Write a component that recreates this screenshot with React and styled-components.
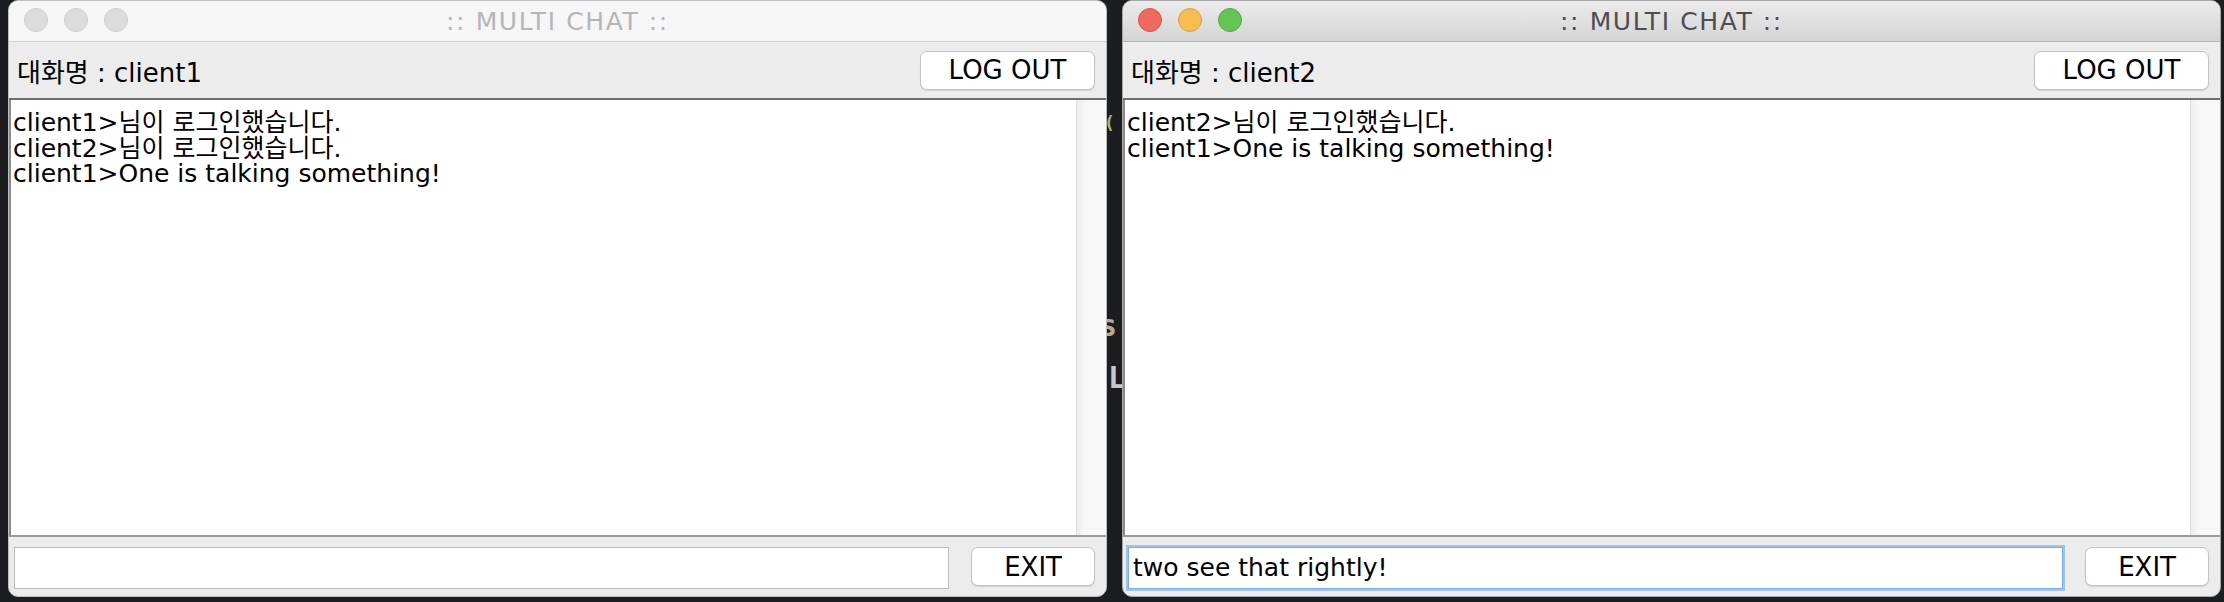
import React from 'react';
import styled, { createGlobalStyle } from 'styled-components';

const GlobalStyle = createGlobalStyle`
  html, body {
    margin: 0;
    padding: 0;
    background: #1c1d20;
    overflow: hidden;
  }
  * { box-sizing: border-box; }
`;

const FONT = `"DejaVu Sans", "Noto Sans CJK KR", sans-serif`;

const chats = [
  {
    id: 'client1',
    active: false,
    lines: ['client1>님이 로그인했습니다.', 'client2>님이 로그인했습니다.', 'client1>One is talking something!'],
    draft: '',
  },
  {
    id: 'client2',
    active: true,
    lines: ['client2>님이 로그인했습니다.', 'client1>One is talking something!'],
    draft: 'two see that rightly!',
  },
];

class ChatWindow extends React.Component {
  render() {
    const { chat } = this.props;
    return (
      <Frame $active={chat.active}>
        <TitleBar $active={chat.active}>
          <Lights>
            <Light $color={chat.active ? '#ee6a5f' : '#dcdcdc'} $edge={chat.active ? '#d4544a' : '#d0d0d0'} />
            <Light $color={chat.active ? '#f5be4f' : '#dcdcdc'} $edge={chat.active ? '#d6a243' : '#d0d0d0'} />
            <Light $color={chat.active ? '#62c554' : '#dcdcdc'} $edge={chat.active ? '#53a840' : '#d0d0d0'} />
          </Lights>
          <Title $active={chat.active}>:: MULTI CHAT ::</Title>
        </TitleBar>
        <Toolbar>
          <NickLabel>대화명 : {chat.id}</NickLabel>
          <MacButton $w={175}>LOG OUT</MacButton>
        </Toolbar>
        <ChatBody>
          <Log>
            {chat.lines.map((line, i) => (
              <Line key={i}>{line}</Line>
            ))}
          </Log>
          <ScrollTrack />
        </ChatBody>
        <BottomBar>
          <MessageInput $focused={chat.active} value={chat.draft} readOnly />
          <MacButton $w={124}>EXIT</MacButton>
        </BottomBar>
      </Frame>
    );
  }
}

export default function App() {
  return (
    <Desktop>
      <GlobalStyle />
      <ChatWindow chat={chats[0]} />
      <TerminalPeek>
        <Peek $top={108} $shift={-3} $size={18} $color="#a9b97c">(</Peek>
        <Peek $top={173} $shift={-8} $size={30} $color="#b7ac8e">s</Peek>
        <Peek $top={22} $shift={1} $size={30} $color="#c9c9c9">L</Peek>
      </TerminalPeek>
      <ChatWindow chat={chats[1]} />
    </Desktop>
  );
}

const Desktop = styled.div`
  display: flex;
  align-items: flex-start;
  width: 2224px;
  height: 602px;
  padding-left: 8px;
  background: #1c1d20;
  font-family: ${FONT};
`;

const TerminalPeek = styled.div`
  width: 15px;
  height: 597px;
  overflow: hidden;
  display: flex;
  flex-direction: column;
`;

const Peek = styled.span`
  display: block;
  margin-top: ${p => p.$top}px;
  margin-left: ${p => p.$shift}px;
  height: 30px;
  font-family: "DejaVu Sans Mono", monospace;
  font-size: ${p => p.$size}px;
  line-height: 30px;
  font-weight: bold;
  color: ${p => p.$color};
`;

const Frame = styled.div`
  width: 1099px;
  height: 597px;
  display: flex;
  flex-direction: column;
  background: #ececec;
  border-radius: 10px;
  border: 1px solid ${p => (p.$active ? '#a8a8a8' : '#bdbdbd')};
  overflow: hidden;
  flex-shrink: 0;
`;

const TitleBar = styled.div`
  position: relative;
  height: 41px;
  flex-shrink: 0;
  display: flex;
  align-items: center;
  justify-content: center;
  border-bottom: 1px solid ${p => (p.$active ? '#b4b4b4' : '#d0d0d0')};
  background: ${p => (p.$active ? 'linear-gradient(#ebebeb, #d5d5d5)' : '#f6f6f6')};
`;

const Lights = styled.div`
  position: absolute;
  left: 15px;
  top: 7px;
  display: flex;
  gap: 16px;
`;

const Light = styled.span`
  width: 24px;
  height: 24px;
  border-radius: 50%;
  background: ${p => p.$color};
  border: 1px solid ${p => p.$edge};
`;

const Title = styled.div`
  font-family: "DejaVu Sans", sans-serif;
  font-size: 25px;
  letter-spacing: 1.6px;
  color: ${p => (p.$active ? '#4d4d4d' : '#b5b5b5')};
`;

const Toolbar = styled.div`
  height: 58px;
  flex-shrink: 0;
  display: flex;
  align-items: center;
  justify-content: space-between;
  padding: 0 11px 0 8px;
  border-bottom: 2px solid #6f6f6f;
`;

const NickLabel = styled.div`
  font-size: 26px;
  color: #000;
`;

const MacButton = styled.div`
  width: ${p => p.$w}px;
  height: 39px;
  display: flex;
  align-items: center;
  justify-content: center;
  background: #fff;
  border: 1px solid #c4c4c4;
  border-radius: 7px;
  box-shadow: 0 1px 1px rgba(0, 0, 0, 0.12);
  font-size: 26px;
  color: #000;
`;

const ChatBody = styled.div`
  flex: 1;
  display: flex;
  background: #fff;
  border-left: 2px solid #8c8c8c;
  border-bottom: 2px solid #9b9b9b;
`;

const Log = styled.div`
  flex: 1;
  padding: 10px 2px;
  font-size: 25px;
  line-height: 25.5px;
  color: #000;
`;

const Line = styled.div`
  white-space: pre;
`;

const ScrollTrack = styled.div`
  width: 30px;
  background: linear-gradient(90deg, #ededed, #f8f8f8 30%, #f8f8f8);
  border-left: 1px solid #dedede;
`;

const BottomBar = styled.div`
  height: 59px;
  flex-shrink: 0;
  display: flex;
  align-items: center;
  gap: 22px;
  padding: 0 11px 0 5px;
`;

const MessageInput = styled.input`
  width: 936px;
  height: 42px;
  margin-top: 2px;
  padding: 0 4px;
  border: 1px solid ${p => (p.$focused ? '#7aaeec' : '#bcbcbc')};
  box-shadow: ${p => (p.$focused ? '0 0 0 2px #9cc3f2' : 'none')};
  background: #fff;
  font-family: ${FONT};
  font-size: 25px;
  color: #000;
  outline: none;
`;
